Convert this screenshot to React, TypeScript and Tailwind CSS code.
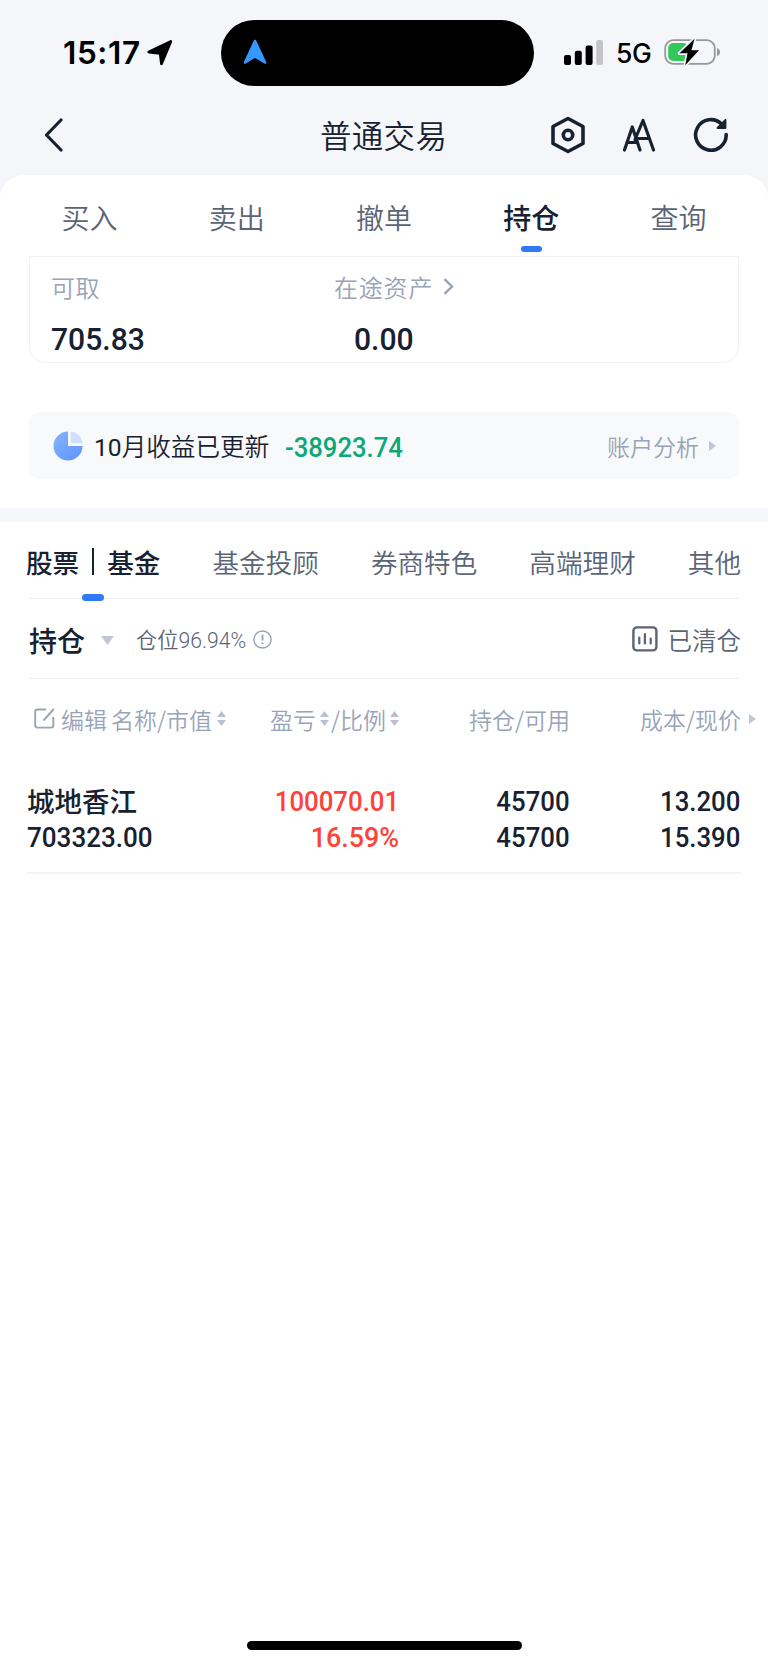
import React from 'react';

const QUICK_TABS = ['买入', '卖出', '撤单', '持仓', '查询'];
const ASSET_TABS = ['基金投顾', '券商特色', '高端理财', '其他'];

const HOLDINGS = [
  {
    name: '城地香江',
    value: '703323.00',
    profit: '100070.01',
    ratio: '16.59%',
    amount: '45700',
    available: '45700',
    cost: '13.200',
    price: '15.390',
  },
];

const App: React.FC = () => {
  return (
    <div className="w-[768px] h-[1665px] flex flex-col overflow-hidden bg-[#f4f6fa] text-[#182130] whitespace-nowrap font-['Noto_Sans_CJK_SC',sans-serif]">
      <StatusBar />
      <NavBar />
      <main className="flex-1 flex flex-col bg-white rounded-t-[24px]">
        <div className="h-[81px] px-[16px] grid grid-cols-5">
          {QUICK_TABS.map(tab => (
            <QuickTab key={tab} label={tab} active={tab === '持仓'} />
          ))}
        </div>

        <section className="mx-[29px] h-[107px] border-[1.5px] border-[#f0f1f3] rounded-b-[16px] flex">
          <div className="w-[284px] pl-[21px] pt-[18px]">
            <p className="text-[24px] leading-[24px] tracking-[0.5px] text-[#99a3b8] font-[350]">可取</p>
            <Num className="mt-[24px] text-[32px] leading-[32px] font-medium origin-left scale-x-[.94]">705.83</Num>
          </div>
          <div className="pl-[20px] pt-[18px]">
            <div className="flex items-center text-[24px] leading-[24px] tracking-[0.8px] text-[#99a3b8] font-[350]">
              在途资产
              <svg className="ml-[10px] mt-[-2px]" width="11" height="17" viewBox="0 0 11 17" fill="none" stroke="#99a3b8" strokeWidth="2.4">
                <path d="M1.5 1.2 9 8.5 1.5 15.8" />
              </svg>
            </div>
            <Num className="mt-[24px] ml-[20px] text-[32px] leading-[32px] font-medium origin-left scale-x-[.94]">0.00</Num>
          </div>
        </section>

        <section className="mt-[49px] mx-[29px] h-[67px] pl-[24px] pr-[23px] rounded-[11px] bg-[#f8f9fb] flex items-center">
          <PieIcon />
          <span className="ml-[11px] pt-[4px] text-[24.6px] leading-[25px] font-[350] font-['Roboto','Noto_Sans_CJK_SC',sans-serif]">
            <span className="font-normal">10</span>月收益已更新
          </span>
          <Num className="ml-[16px] pt-[5px] text-[27px] leading-[27px] font-medium text-[#0ca876] origin-left scale-x-[.95]">-38923.74</Num>
          <span className="ml-auto pt-[1px] text-[23px] leading-[23px] font-[350] text-[#99a3b8]">账户分析</span>
          <svg className="ml-[10px]" width="7" height="10" viewBox="0 0 7 10">
            <path d="M0 0 7 5 0 10z" fill="#c0c6d4" />
          </svg>
        </section>

        <div className="mt-[29px] h-[14px] bg-[#f4f6fa]" />

        <div className="mx-[27px] h-[76px] flex items-center justify-between text-[26.6px] leading-[27px] text-[#5a6476]">
          <div className="relative ml-[-1px] h-full flex items-center gap-[13px] font-medium text-[#182130]">
            <span className="pt-[2px]">股票</span>
            <span className="mt-[3px] w-[2px] h-[27px] bg-[#182130]" />
            <span className="pt-[2px]">基金</span>
            <span className="absolute left-[56px] bottom-[-3px] w-[22px] h-[7px] rounded-full bg-[#2f7af6]" />
          </div>
          {ASSET_TABS.map(tab => (
            <span key={tab} className="pt-[2px] font-[350]">{tab}</span>
          ))}
        </div>

        <div className="mx-[29px] h-[81px] border-y-[1.5px] border-[#eeeff2] flex items-center">
          <span className="pt-[2px] text-[28px] leading-[28px] font-medium">持仓</span>
          <svg className="ml-[16px] mt-[3px]" width="13" height="9" viewBox="0 0 13 9">
            <path d="M0 0H13L6.5 9z" fill="#c0c6d4" />
          </svg>
          <span className="ml-[22px] pt-[3px] text-[21.2px] leading-[21px] font-[350] text-[#5a6476] font-['Roboto','Noto_Sans_CJK_SC',sans-serif]">
            仓位<span className="font-light">96.94%</span>
          </span>
          <svg className="ml-[7px] mt-[1px]" width="19" height="19" viewBox="0 0 19 19" fill="none" stroke="#99a3b8">
            <circle cx="9.5" cy="9.5" r="8.6" strokeWidth="1.5" />
            <path d="M9.5 4.8V10.6M9.5 12.4V14" strokeWidth="1.9" />
          </svg>
          <ChartBoxIcon />
          <span className="ml-[10px] mr-[-2px] pt-[2px] text-[24.5px] leading-[25px] text-[#5a6476] font-[350]">已清仓</span>
        </div>

        <div className="mx-[27px] h-[82px] pb-[1px] flex items-center text-[23px] leading-[23px] font-[350] text-[#99a3b8]">
          <div className="w-[240px] pl-[7px] flex items-center">
            <EditIcon />
            <span className="ml-[6px]">编辑</span>
            <span className="ml-[4px]">名称/市值</span>
            <SortIcon className="ml-[5px]" />
          </div>
          <div className="w-[133px] flex items-center justify-end">
            盈亏
            <SortIcon className="ml-[4px] mr-[2px]" />
            /比例
            <SortIcon className="ml-[4px] mr-px" />
          </div>
          <span className="w-[170px] text-right">持仓/可用</span>
          <span className="w-[171px] text-right">成本/现价</span>
          <svg className="ml-[8px] mr-[-15px] mt-[-2px] shrink-0" width="7" height="10" viewBox="0 0 7 10">
            <path d="M0 0 7 5 0 10z" fill="#c0c6d4" />
          </svg>
        </div>

        {HOLDINGS.map(h => (
          <div key={h.name} className="mx-[27px] pt-[23px] h-[113px] border-b-2 border-[#f2f3f5] flex text-[28px] leading-[36px] font-medium">
            <div className="w-[240px]">
              <p className="mt-[-2px] mb-[2px] text-[27.5px] leading-[36px]">{h.name}</p>
              <Num className="origin-left scale-x-[.93]">{h.value}</Num>
            </div>
            <div className="w-[132px] flex flex-col items-end text-[#ff4238]">
              <Num className="origin-right scale-x-[.92]">{h.profit}</Num>
              <Num className="origin-right scale-x-[.96]">{h.ratio}</Num>
            </div>
            <div className="w-[171px] flex flex-col items-end">
              <Num className="origin-right scale-x-[.92]">{h.amount}</Num>
              <Num className="origin-right scale-x-[.92]">{h.available}</Num>
            </div>
            <div className="w-[170px] flex flex-col items-end">
              <Num className="origin-right scale-x-[.92]">{h.cost}</Num>
              <Num className="origin-right scale-x-[.92]">{h.price}</Num>
            </div>
          </div>
        ))}

        <div className="mt-auto mb-[15px] mx-auto w-[275px] h-[9px] rounded-full bg-black" />
      </main>
    </div>
  );
};

const StatusBar = () => (
  <header className="h-[100px] pl-[63px] flex text-black font-['Inter',sans-serif]">
    <div className="w-[158px] h-[105px] flex items-center">
      <span className="text-[31.5px] leading-[32px] font-semibold tracking-[0.6px]">15:17</span>
      <svg className="ml-[6px]" width="26" height="26" viewBox="0 0 26 26">
        <path d="M23.8 1.5 14.5 23.8 13.2 13.3 1.8 12z" fill="#000" stroke="#000" strokeWidth="2.8" strokeLinejoin="round" />
      </svg>
    </div>
    <div className="mt-[20px] w-[313px] h-[66px] rounded-full bg-black pl-[22px] pt-[19px]">
      <svg width="24" height="26" viewBox="0 0 24 26">
        <path d="M12 2 22 23.5 12 17.5 2 23.5z" fill="#3499ff" stroke="#3499ff" strokeWidth="2.6" strokeLinejoin="round" />
      </svg>
    </div>
    <div className="h-[106px] flex items-center">
      <svg className="ml-[30px] mt-[-2px]" width="39" height="25" viewBox="0 0 39 25">
        <rect x="0" y="15" width="7" height="10" rx="2" />
        <rect x="10.8" y="10.8" width="7" height="14.2" rx="2" />
        <rect x="21.6" y="5.4" width="7" height="19.6" rx="2" />
        <rect x="32.3" y="0" width="6.7" height="25" rx="2" fill="#c4c4c8" />
      </svg>
      <span className="ml-[13px] text-[26.5px] leading-[26px] font-medium tracking-[-0.5px]">5G</span>
      <svg className="ml-[13px] mt-[-2px]" width="57" height="28" viewBox="0 0 57 28">
        <rect x="1.2" y="2.2" width="49.6" height="23.6" rx="8" fill="none" stroke="#98989c" strokeWidth="1.8" />
        <path d="M53 10q3 1 3 4t-3 4z" fill="#98989c" />
        <rect x="4.2" y="5" width="20" height="18" rx="5" fill="#34c759" />
        <path d="M30.5.8 15.5 15.2h8L21.3 27.2 35 12.3h-7.5z" fill="#000" stroke="#f4f6fa" strokeWidth="3.4" paintOrder="stroke" strokeLinejoin="round" />
      </svg>
    </div>
  </header>
);

const NavBar = () => (
  <nav className="h-[75px] px-[40px] flex items-center">
    <svg className="mt-[-5px] ml-[4px]" width="20" height="34" viewBox="0 0 20 34" fill="none" stroke="#182130" strokeWidth="3.2" strokeLinecap="round" strokeLinejoin="round">
      <path d="M17 2 2.5 17 17 32" />
    </svg>
    <h1 className="ml-[256px] mt-[-7px] text-[31.5px] leading-[32px] tracking-[0.3px] font-[350]">普通交易</h1>
    <div className="ml-auto mr-[-1px] mt-[-5px] flex items-center text-[#182130]">
      <svg width="36" height="40" viewBox="0 0 36 40" fill="none" stroke="currentColor" strokeWidth="3.6" strokeLinejoin="round">
        <path d="M18 3.5 33 11.5V28.5L18 36.5 3 28.5V11.5z" />
        <circle cx="18" cy="20" r="4.7" />
      </svg>
      <svg className="ml-[36px] mr-px" width="34" height="40" viewBox="0 0 34 40" fill="none" stroke="currentColor" strokeWidth="3.2" strokeLinecap="round" strokeLinejoin="round">
        <path d="M2.5 35 10.3 12 18 35M4.8 27.5H15.5M13 24.5 21 5.5 31.5 35M16 23.5H27" />
      </svg>
      <svg className="ml-[36px]" width="36" height="40" viewBox="0 0 36 40" fill="none" stroke="currentColor" strokeWidth="3.6" strokeLinecap="round">
        <path d="M33.2 19.5A15.3 15.3 0 1 1 28.6 9" />
        <path d="M32.5 4.8V13H24.5z" fill="currentColor" strokeWidth="1.8" strokeLinejoin="round" />
      </svg>
    </div>
  </nav>
);

const QuickTab: React.FC<{ label: string, active: boolean }> = ({ label, active }) => (
  <div className="flex flex-col items-center pt-[28px]">
    <span className={`text-[28px] leading-[28px] ${active ? 'font-medium text-[#182130]' : 'font-[350] text-[#5a6476]'}`}>{label}</span>
    {active && <span className="mt-[15px] w-[21px] h-[6px] rounded-full bg-[#2f7af6]" />}
  </div>
);

const Num: React.FC<{ children: React.ReactNode, className?: string }> = ({ children, className = '' }) => (
  <div className={`font-['Roboto',sans-serif] ${className}`}>{children}</div>
);

const SortIcon: React.FC<{ className?: string }> = ({ className = '' }) => (
  <svg className={`shrink-0 mt-[-2px] ${className}`} width="9" height="15" viewBox="0 0 9 15" fill="#b9c0cf">
    <path d="M4.5 0 9 6H0zM4.5 15 0 9H9z" />
  </svg>
);

const PieIcon = () => (
  <svg width="30" height="30" viewBox="0 0 30 30">
    <defs>
      <linearGradient id="pie" x1="0" y1="0" x2="1" y2="1">
        <stop offset="0" stopColor="#86b3ff" />
        <stop offset="1" stopColor="#5c94ff" />
      </linearGradient>
    </defs>
    <path d="M15 .5A14.5 14.5 0 1 0 29.5 15H15z" fill="url(#pie)" />
    <path d="M17.7.5A12.5 12.5 0 0 1 29.5 12.3H17.7z" fill="#cfe0fe" />
  </svg>
);

const ChartBoxIcon = () => (
  <svg className="ml-auto mt-[1px]" width="26" height="26" viewBox="0 0 26 26" fill="none" stroke="#5a6476" strokeWidth="2.4" strokeLinecap="round">
    <rect x="1.4" y="1.4" width="23" height="23" rx="3.5" />
    <path d="M7.3 11.5V17.5M12.9 8V17.5M18.7 12.5V17.5" strokeWidth="2.2" />
  </svg>
);

const EditIcon = () => (
  <svg className="mt-[-3px]" width="21" height="21" viewBox="0 0 21 21" fill="none" stroke="#99a3b8" strokeWidth="1.9">
    <path d="M12 1.5H3.5a2.3 2.3 0 0 0-2.3 2.3V17.3a2.3 2.3 0 0 0 2.3 2.3H17a2.3 2.3 0 0 0 2.3-2.3V9M9.5 12.5 19.8 1" />
  </svg>
);

export default App;
